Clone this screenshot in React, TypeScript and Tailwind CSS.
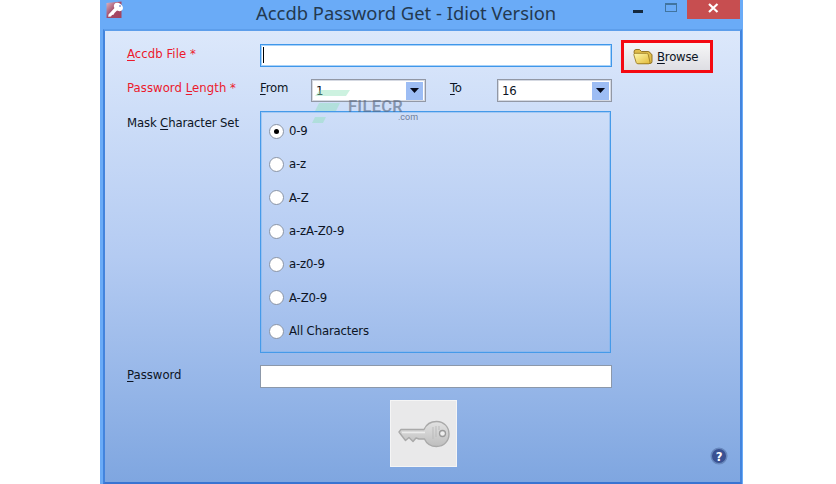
import React from "react";

const charSets = ["0-9", "a-z", "A-Z", "a-zA-Z0-9", "a-z0-9", "A-Z0-9", "All Characters"];

function Key({ children }: { children: React.ReactNode }) {
  return <span className="underline decoration-1 underline-offset-2">{children}</span>;
}

function Combo({ value }: { value: string }) {
  return (
    <div className="flex h-[23px] w-[115px] items-center justify-between border border-[#9298a5] bg-white pl-[4px] pr-[2px] shadow-[inset_0_0_0_1px_#d5d9e2]">
      <span>{value}</span>
      <span className="flex h-[18px] w-[17px] items-center justify-center bg-[#9dbdf4]">
        <svg width="9" height="5" viewBox="0 0 9 5"><path d="M0 0h9L4.5 5z" fill="#050a1c" /></svg>
      </span>
    </div>
  );
}

function AppIcon() {
  return (
    <svg width="18" height="18" viewBox="0 0 18 18">
      <defs>
        <linearGradient id="app" x1="0" y1="0" x2="1" y2="1">
          <stop offset="0" stopColor="#dcb9c8" /><stop offset=".5" stopColor="#a34b66" /><stop offset="1" stopColor="#a5425d" />
        </linearGradient>
      </defs>
      <path d="M.5 2L15.5.5V17H.5z" fill="url(#app)" />
      <ellipse cx="12.4" cy="6" rx="4.9" ry="3.7" transform="rotate(35 12.4 6)" fill="#fff" />
      <circle cx="14" cy="4.9" r="1" fill="#8899cf" />
      <path d="M9 6.5L2.5 13.5l-.3 2.3 2.8-.3 1-1.5 1.5-.3 1-1.7 3-3z" fill="#fff" />
    </svg>
  );
}

function Folder() {
  return (
    <svg width="20" height="17" viewBox="0 0 20 17">
      <defs>
        <linearGradient id="folder" x1="0" y1="0" x2="1" y2="1">
          <stop offset="0" stopColor="#fffab0" /><stop offset="1" stopColor="#e3b936" />
        </linearGradient>
      </defs>
      <path d="M3.5 13L1 4q0-2.5 2-2.500h3.500l2 2H15q2 0 2.500 2l1.500 1v7q0 2-2 2H6q-2 0-2.500-2.500z" fill="#e0bd4c" stroke="#8b6b18" strokeWidth=".9" />
      <path d="M.8 6.700q0-1.400 1.200-1.400h11.500q1.300 0 1.700 1.200l1.800 7.700q.2 1.600-1.400 1.600H5q-1.500 0-1.900-1.400z" fill="url(#folder)" stroke="#94741c" strokeWidth=".8" />
    </svg>
  );
}

function KeyPicture() {
  return (
    <svg width="54" height="28" viewBox="0 0 54 28">
      <defs>
        <linearGradient id="key" x1="0" y1="0" x2="0" y2="1">
          <stop offset="0" stopColor="#e2e2e2" /><stop offset="1" stopColor="#bebebe" />
        </linearGradient>
      </defs>
      <path d="M27 9.500C29 5 33.500 1.500 39.500 1.500 47 1.500 52 7 52 14s-5 12.500-12.500 12.500c-5.500 0-10-3-12-7.500H22l-3-1-3 3.500-4-4-3.500 3L5 16l-3-4 2-2.500h23z" fill="url(#key)" stroke="#a9a9a9" strokeWidth="1.4" strokeLinejoin="round" />
      <path d="M5 12.500h23" stroke="#ececec" strokeWidth="1.6" />
      <path d="M36 7v12M39 6v11M42 6v4" stroke="#bbb" />
      <circle cx="45.5" cy="13.500" r="3" fill="#eee" stroke="#9a9a9a" strokeWidth="1.3" />
    </svg>
  );
}

export default function App() {
  return (
    <div className="relative h-[484px] w-[836px] overflow-hidden bg-white pl-[100px] font-['DejaVu_Sans_Condensed','Noto_Sans',sans-serif] text-[13px] leading-4 tracking-[-0.15px] text-[#0c1424]">
      <main className="flex h-[484px] w-[643px] flex-col bg-[#6aabf7]">
        <header className="flex h-[29px] shrink-0">
          <div className="w-[156px] shrink-0 pl-[6px] pt-px"><AppIcon /></div>
          <h1 className="w-[330px] shrink-0 whitespace-nowrap font-['Noto_Sans',sans-serif] text-[18.4px] leading-[25px] tracking-normal text-[#233950]">Accdb Password Get - Idiot Version</h1>
          <div className="ml-auto flex">
            <div className="mr-[22px] mt-[10px] h-[3px] w-[10px] bg-[#14293f]" />
            <div className="mr-[10px] mt-[3px] h-[9px] w-[12px] border border-t-2 border-[#41749f]" />
            <div className="mr-[3px] flex h-[19px] w-[53px] justify-center bg-[#c74e50] pt-[3px]">
              <svg width="11" height="10" viewBox="0 0 11 10"><path d="M1 1l8.5 8M9.5 1L1 9" stroke="white" strokeWidth="2.2" /></svg>
            </div>
          </div>
        </header>
        <section className="ml-[3px] mr-px flex h-[455px] flex-col border-x-2 border-y-2 border-b-[#3974d2] border-t-[#5d9eeb] border-x-[#4384dd] bg-linear-to-b from-[#dce8fb] via-[#b4cbf2] to-[#7fa6e0] pl-[22px] pt-[9px]">
          <div className="flex h-[33px] shrink-0">
            <div className="w-[133px] pt-[6px] tracking-[0.05px] text-[#ec192c]"><Key>A</Key>ccdb File *</div>
            <div className="mt-[4px] h-[23px] w-[352px] border border-[#3f97ea] bg-white pl-[2px] pt-[2px] shadow-[inset_0_0_0_1px_#a9d2f8]"><div className="h-[16px] w-px bg-black" /></div>
            <button className="ml-[9px] flex h-[33px] w-[92px] items-center gap-[4px] border-[3px] border-[#f40911] bg-linear-to-b from-[#f6f6f7] to-[#dedee3] pl-[9px]"><Folder /><span className="tracking-[-0.2px]"><Key>B</Key>rowse</span></button>
          </div>
          <div className="mt-[6px] flex h-[23px] shrink-0">
            <div className="w-[133px] pt-px tracking-[0.05px] text-[#ec192c]">Password <Key>L</Key>ength *</div>
            <div className="w-[51px] pt-px"><Key>F</Key>rom</div>
            <Combo value="1" />
            <div className="ml-[24px] w-[47px] pt-px"><Key>T</Key>o</div>
            <Combo value="16" />
          </div>
          <div className="mt-[9px] flex h-[242px] shrink-0">
            <div className="w-[133px] pt-[4px]">Mask <Key>C</Key>haracter Set</div>
            <div className="flex w-[351px] flex-col gap-[17.35px] border border-[#459ae9] pl-[8px] pt-[11px] shadow-[inset_0_0_0_1px_#79b3ef80]">
              {charSets.map((label, index) => (
                <label key={label} className="flex h-4 items-center gap-[5px]">
                  <span className="flex h-[15px] w-[15px] items-center justify-center rounded-full border border-[#8a94a5] bg-white">
                    {index === 0 && <span className="h-[5px] w-[5px] rounded-full bg-black" />}
                  </span>
                  {label}
                </label>
              ))}
            </div>
          </div>
          <div className="mt-[12px] flex h-[24px] shrink-0">
            <div className="w-[133px] pt-[2px] tracking-[0px]"><Key>P</Key>assword</div>
            <div className="h-[23px] w-[352px] border border-[#8c98aa] bg-white" />
          </div>
          <div className="mt-[11px] flex shrink-0">
            <div className="ml-[263px] flex h-[67px] w-[67px] items-center justify-center border border-[#f5f5f5] bg-[#e9e9ea]"><KeyPicture /></div>
            <div className="ml-[253px] mt-[47px]">
              <svg width="18" height="18" viewBox="0 0 18 18"><circle cx="9" cy="9" r="7.8" fill="#3a5192" stroke="#6788bd" strokeWidth="1.5" /><text x="9" y="13.5" textAnchor="middle" fontSize="13" fontWeight="700" fill="white">?</text></svg>
            </div>
          </div>
        </section>
      </main>
      <div className="absolute left-[312px] top-[89px] h-[36px] w-[108px]">
        <svg className="absolute inset-0" width="108" height="36" viewBox="0 0 108 36"><g fill="#8ce2b7" opacity=".43"><path d="M8 1h30l-4 6H3zM7 14h21l-4 8H3zM3 28h11l-3 6H0z" /></g></svg>
        <span className="absolute left-[36px] top-[12px] font-['Roboto',sans-serif] text-[16.5px] font-semibold leading-[12px] tracking-[0.3px] text-[#53637d]/60">FILECR</span>
        <span className="absolute left-[86px] top-[24px] font-['Roboto',sans-serif] text-[9px] leading-[9px] tracking-[0px] text-[#53637d]/80">.com</span>
      </div>
    </div>
  );
}
